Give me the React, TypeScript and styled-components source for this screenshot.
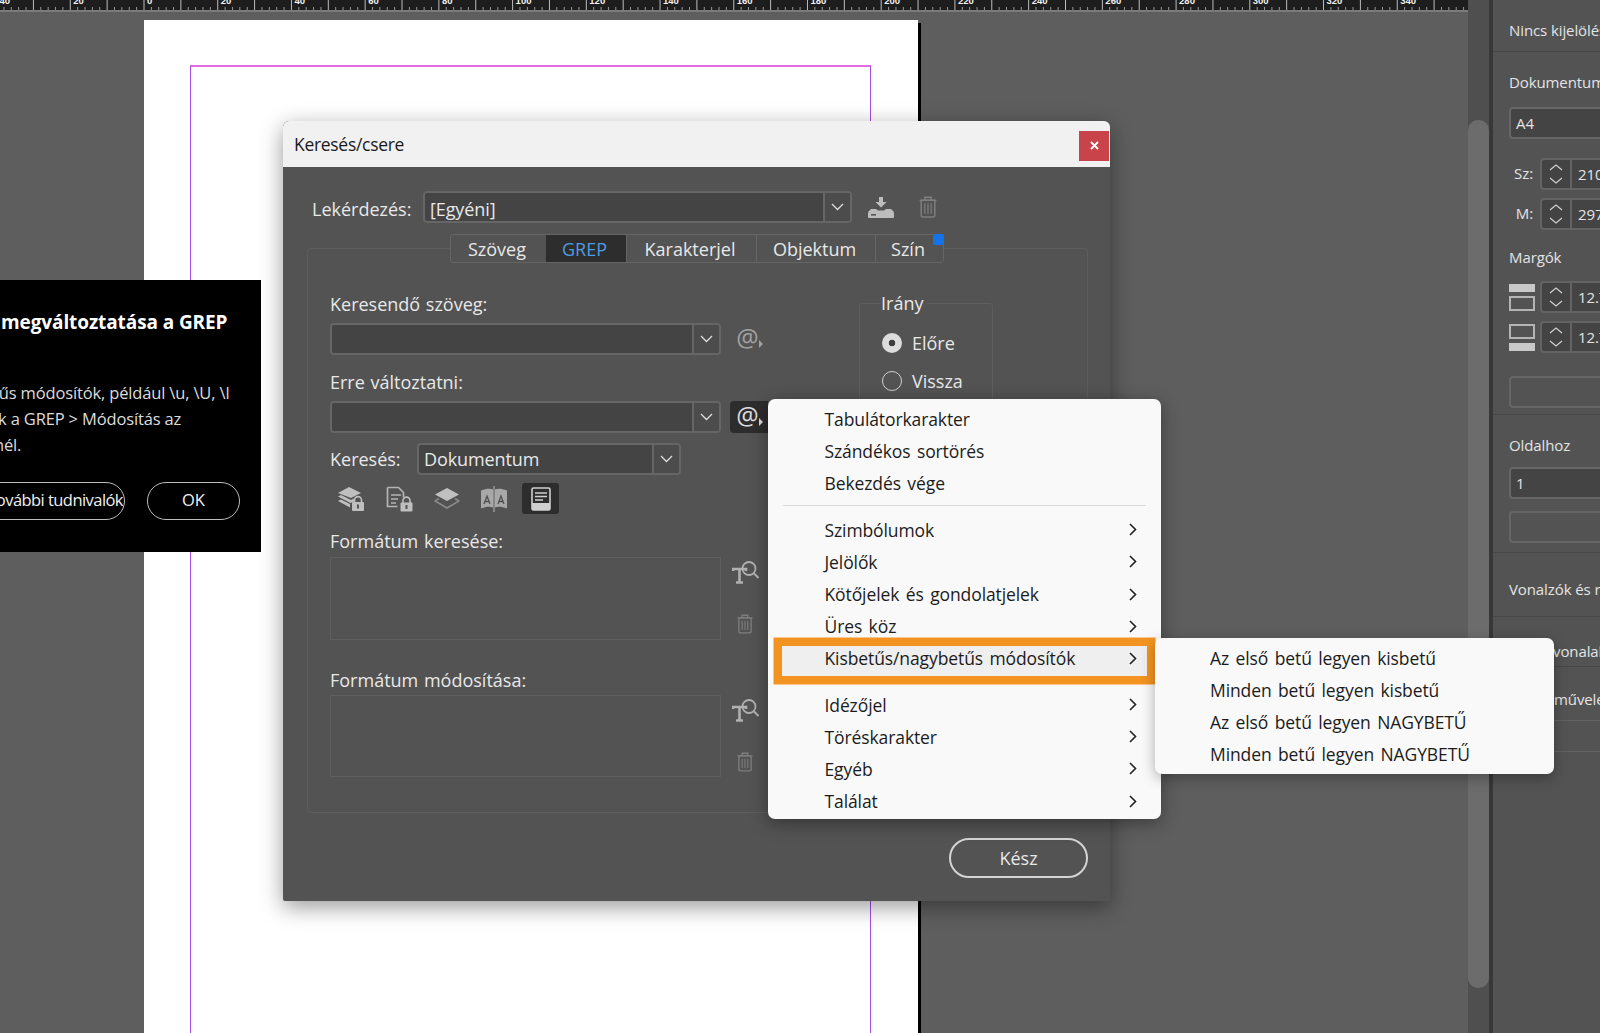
import React from "react";
import styled, { createGlobalStyle } from "styled-components";

const FONT = `"Open Sans", "Noto Sans", "Liberation Sans", sans-serif`;

const Global = createGlobalStyle`
  html, body { margin: 0; padding: 0; background: #5e5e5e; }
  body { font-family: ${FONT}; }
  * { box-sizing: border-box; }
`;

const Shell = styled.div`
  position: relative;
  width: 1600px;
  height: 1033px;
  overflow: hidden;
  display: flex;
  background: #5e5e5e;
`;

const Work = styled.div`
  width: 1468px;
  height: 1033px;
  display: flex;
  flex-direction: column;
  overflow: hidden;
`;

const RulerBar = styled.div`
  height: 12px;
  flex: none;
  background: #1d1d1d;
  border-bottom: 2px solid #7b7b7b;
  overflow: hidden;
`;

const Canvas = styled.div`
  flex: 1;
  padding: 8px 0 0 144px;
  background: #5e5e5e;
  overflow: hidden;
`;

const Page = styled.div`
  width: 774px;
  height: 1100px;
  background: #fff;
  box-shadow: 3px 3px 0 #000;
  padding: 45px 47px 0 46px;
`;

const MarginFrame = styled.div`
  height: 1500px;
  border: 1px solid #a64de8;
  border-top-color: #e46ae8;
  border-top-width: 2px;
`;

const Track = styled.div`
  width: 21px;
  height: 1033px;
  background: #4f4f4f;
  padding-top: 120px;
  flex: none;
`;

const Thumb = styled.div`
  height: 868px;
  background: #6c6c6c;
  border-radius: 10px;
`;

const Panel = styled.aside`
  flex: none;
  width: 111px;
  height: 1033px;
  background: #535353;
  border-left: 4px solid #383838;
  color: #e4e4e4;
  font-size: 15px;
  letter-spacing: -0.1px;
  overflow: hidden;
`;

const PanelSection = styled.div<{ $h: number }>`
  height: ${(p) => p.$h}px;
  width: 300px;
  padding-left: 16px;
  border-bottom: 1px solid #484848;
`;

const PanelTitle = styled.div<{ $top: number; $left?: number }>`
  padding-top: ${(p) => p.$top}px;
  padding-left: ${(p) => p.$left ?? 0}px;
  line-height: 20px;
  white-space: nowrap;
`;

const PanelField = styled.div<{ $top: number }>`
  margin-top: ${(p) => p.$top}px;
  width: 200px;
  height: 32px;
  background: #444;
  border: 2px solid #666;
  border-radius: 4px;
  padding-left: 5px;
  line-height: 28px;
  font-size: 15px;
`;

const PanelGhost = styled(PanelField)`
  background: transparent;
`;

const SpinRow = styled.div<{ $top: number }>`
  display: flex;
  align-items: center;
  margin-top: ${(p) => p.$top}px;
  height: 32px;
`;

const SpinLabel = styled.div`
  width: 24px;
  text-align: right;
  margin-right: 7px;
  padding-bottom: 3px;
  font-size: 15px;
`;

const SpinIconSlot = styled.div`
  width: 31px;
  display: flex;
`;

const Spin = styled.div`
  width: 30px;
  height: 32px;
  background: #434343;
  border: 2px solid #636363;
  border-right: 0;
  border-radius: 4px 0 0 4px;
  display: flex;
  align-items: center;
  justify-content: center;
`;

const SpinValue = styled.div`
  width: 120px;
  height: 32px;
  background: #444;
  border: 2px solid #636363;
  border-radius: 0 4px 4px 0;
  padding-left: 6px;
  line-height: 28px;
  font-size: 15px;
`;

const PanelRule = styled.div<{ $h: number }>`
  height: ${(p) => p.$h}px;
  width: 300px;
  border-bottom: 1px solid #636363;
`;

/* dialog */
const Dialog = styled.section`
  position: absolute;
  left: 283px;
  top: 121px;
  width: 827px;
  height: 780px;
  background: #535353;
  border-radius: 6px 6px 2px 2px;
  box-shadow: 0 6px 22px rgba(0, 0, 0, 0.4);
  color: #e8e8e8;
  font-size: 18px;
  word-spacing: 1px;
`;

const TitleBar = styled.header`
  height: 46px;
  background: #f1f1f1;
  border-radius: 6px 6px 0 0;
  color: #1a1a1a;
  display: flex;
  align-items: center;
  justify-content: space-between;
  padding: 0 1px 0 11px;
`;

const TitleText = styled.div`
  font-size: 17.5px;
  letter-spacing: -0.3px;
`;

const CloseBtn = styled.div`
  width: 30px;
  height: 30px;
  background: #c9444a;
  color: #fff;
  display: flex;
  align-items: center;
  justify-content: center;
  margin-top: 3px;
`;

const QueryRow = styled.div`
  display: flex;
  align-items: center;
  margin: 24px 0 0 29px;
  height: 32px;
`;

const QueryLabel = styled.div`
  width: 111px;
  padding-top: 3px;
`;

const Select = styled.div<{ $w: number }>`
  width: ${(p) => p.$w}px;
  height: 32px;
  flex: none;
  display: flex;
  background: #444;
  border: 2px solid #666;
  border-radius: 4px;
  overflow: hidden;
`;

const SelectText = styled.div`
  flex: 1;
  padding-left: 5px;
  line-height: 29px;
  white-space: nowrap;
  letter-spacing: -0.1px;
`;

const QuerySelectText = styled(SelectText)`
  line-height: 32px;
`;

const SelectBtn = styled.div`
  width: 27px;
  flex: none;
  background: #4c4c4c;
  border-left: 2px solid #666;
  display: flex;
  align-items: center;
  justify-content: center;
`;

const QueryIcons = styled.div`
  display: flex;
  align-items: center;
  margin-left: 16px;
  gap: 25px;
`;

const Tabs = styled.nav`
  position: relative;
  margin: 11px 0 -15px 167px;
  width: 494px;
  height: 29px;
  display: flex;
  background: #535353;
  border: 1px solid #656565;
  border-radius: 3px;
`;

const Tab = styled.div<{ $w: number; $on?: boolean }>`
  width: ${(p) => p.$w}px;
  flex: none;
  height: 100%;
  padding: 1px 3px 0 0;
  display: flex;
  align-items: center;
  justify-content: center;
  background: ${(p) => (p.$on ? "#2d2d2d" : "transparent")};
  color: ${(p) => (p.$on ? "#4d9be0" : "#e8e8e8")};
  border-left: ${(p) => (p.$on ? "0" : "1px solid #656565")};
  &:first-child { border-left: 0; }
`;

const BlueDot = styled.span`
  position: absolute;
  right: -1px;
  top: -1px;
  width: 11px;
  height: 11px;
  border-radius: 2px;
  background: #1473e6;
`;

const Group = styled.div`
  margin: 0 22px 0 24px;
  height: 565px;
  border: 1px solid #5d5d5d;
  border-radius: 4px;
  padding: 44px 0 0 22px;
  display: flex;
`;

const LeftCol = styled.div`
  width: 529px;
  flex: none;
`;

const FieldLabel = styled.div<{ $top?: number }>`
  height: 24px;
  line-height: 22px;
  margin-top: ${(p) => p.$top ?? 0}px;
  white-space: nowrap;
`;

const ComboRow = styled.div<{ $top: number }>`
  margin-top: ${(p) => p.$top}px;
  display: flex;
  align-items: center;
`;

const AtBtn = styled.div<{ $on?: boolean }>`
  width: 38px;
  height: 32px;
  margin-left: 9px;
  flex: none;
  border-radius: 4px 0 0 4px;
  background: ${(p) => (p.$on ? "#2d2d2d" : "transparent")};
  color: ${(p) => (p.$on ? "#dcdcdc" : "#a0a0a0")};
  display: flex;
  align-items: center;
  justify-content: center;
  font-size: 25px;
  padding-left: 1px;
  padding-bottom: 3px;
  line-height: 1;
`;

const AtCaret = styled.span`
  width: 0;
  height: 0;
  margin: 12px 0 0 0;
  border-left: 4px solid currentColor;
  border-top: 4px solid transparent;
  border-bottom: 4px solid transparent;
`;

const SearchRow = styled.div`
  margin-top: 10px;
  display: flex;
  align-items: center;
`;

const SearchLabel = styled.div`
  width: 87px;
`;

const ToolRow = styled.div`
  margin-top: 8px;
  height: 31px;
  display: flex;
  align-items: center;
  padding-left: 2px;
`;

const ToolBtn = styled.div<{ $on?: boolean; $gap?: number }>`
  width: 37px;
  height: 31px;
  margin-right: ${(p) => p.$gap ?? 10}px;
  border-radius: 3px;
  background: ${(p) => (p.$on ? "#2d2d2d" : "transparent")};
  display: flex;
  align-items: center;
  justify-content: center;
`;

const FormatRow = styled.div<{ $top: number; $h: number }>`
  margin-top: ${(p) => p.$top}px;
  height: ${(p) => p.$h}px;
  display: flex;
`;

const FormatBox = styled.div`
  width: 391px;
  height: 100%;
  border: 1px solid #5e5e5e;
`;

const FormatTools = styled.div`
  width: 48px;
  display: flex;
  flex-direction: column;
  align-items: center;
  padding-top: 3px;
  gap: 30px;
`;

const Direction = styled.fieldset`
  margin: -2px 0 0 0;
  width: 134px;
  height: 160px;
  padding: 0 0 0 22px;
  border: 1px solid #5e5e5e;
  border-radius: 3px;
  min-inline-size: 0;
`;

const DirectionLegend = styled.legend`
  padding: 0 4px 0 0;
  margin-left: -1px;
  line-height: 24px;
`;

const Radio = styled.div<{ $top: number }>`
  display: flex;
  align-items: center;
  height: 24px;
  margin-top: ${(p) => p.$top}px;
`;

const RadioDot = styled.span<{ $on?: boolean }>`
  width: 20px;
  height: 20px;
  border-radius: 50%;
  margin-right: 10px;
  flex: none;
  background: ${(p) => (p.$on ? "radial-gradient(circle, #3d3d3d 0 3px, #dcdcdc 3.6px)" : "transparent")};
  border: ${(p) => (p.$on ? "0" : "1.5px solid #cfcfcf")};
`;

const Footer = styled.div`
  display: flex;
  justify-content: flex-end;
  margin: 25px 22px 0 0;
`;

const DoneBtn = styled.div`
  width: 139px;
  height: 40px;
  border: 2px solid #d4d4d4;
  border-radius: 20px;
  display: flex;
  align-items: center;
  justify-content: center;
`;

/* menus */
const Menu = styled.div`
  position: absolute;
  left: 768px;
  top: 399px;
  width: 393px;
  height: 420px;
  padding: 4px 14px 0;
  background: #f9f9f9;
  border-radius: 7px;
  box-shadow: 0 4px 18px rgba(0, 0, 0, 0.38);
  color: #1c1c1c;
  font-size: 17.5px;
  letter-spacing: -0.1px;
  word-spacing: 2px;
`;

const MenuRow = styled.div`
  position: relative;
  height: 32.2px;
  display: flex;
  align-items: center;
  justify-content: space-between;
  padding: 0 10px 0 42.5px;
  white-space: nowrap;
`;

const MenuRowLabel = styled.span`
  position: relative;
`;

const MenuRowArrow = styled.span`
  position: relative;
  display: flex;
`;

const HotRow = styled(MenuRow)`
  &::before {
    content: "";
    position: absolute;
    inset: 4px 0 -1px 0;
    background: #efefef;
    box-shadow: 0 0 0 8.5px #f39422;
  }
`;

const MenuSep = styled.div<{ $top: number; $bottom: number }>`
  height: 1px;
  background: #dcdcdc;
  margin: ${(p) => p.$top}px 1px ${(p) => p.$bottom}px;
`;

const SubMenu = styled.div`
  position: absolute;
  left: 1155px;
  top: 638px;
  width: 399px;
  height: 136px;
  padding: 5px 0 0 55px;
  background: #f9f9f9;
  border-radius: 7px;
  box-shadow: 0 4px 14px rgba(0, 0, 0, 0.3);
  color: #1c1c1c;
  font-size: 17.5px;
  letter-spacing: -0.1px;
  word-spacing: 2px;
`;

const SubRow = styled.div`
  height: 32px;
  line-height: 31px;
  white-space: nowrap;
`;

/* callout */
const Callout = styled.div`
  position: absolute;
  left: 0;
  top: 280px;
  width: 261px;
  height: 272px;
  background: #000;
  color: #dcdcdc;
  overflow: hidden;
  font-size: 16.5px;
  padding-top: 30px;
`;

const CalloutTitle = styled.div`
  margin-left: 1px;
  color: #fff;
  font-weight: 700;
  font-size: 19px;
  line-height: 25px;
  letter-spacing: -0.1px;
  white-space: nowrap;
`;

const CalloutLine = styled.div<{ $lead: number }>`
  margin-left: ${(p) => p.$lead}px;
  line-height: 25.8px;
  letter-spacing: -0.15px;
  white-space: nowrap;
`;

const CalloutBody = styled.div`
  margin-top: 45px;
`;

const CalloutActions = styled.div`
  display: flex;
  margin-top: 25px;
  align-items: center;
`;

const PillMore = styled.div`
  width: 182px;
  height: 38px;
  margin-left: -57px;
  border: 1.5px solid #bdbdbd;
  border-radius: 19px;
  display: flex;
  align-items: center;
  justify-content: flex-end;
  color: #f0f0f0;
  letter-spacing: -0.55px;
  white-space: nowrap;
  overflow: hidden;
  padding: 0 1px 3px 0;
`;

const PillOk = styled.div`
  width: 93px;
  height: 38px;
  margin-left: 22px;
  border: 1.5px solid #bdbdbd;
  border-radius: 19px;
  display: flex;
  align-items: center;
  justify-content: center;
  padding-bottom: 3px;
  color: #f0f0f0;
`;

const RulerSvg = styled.svg`
  display: block;
`;

/* drawings */
const Chevron = ({ dir = "down", color = "#dedede" }: { dir?: "down" | "up" | "right"; color?: string }) => {
  if (dir === "right")
    return (
      <svg width="8" height="13" viewBox="0 0 8 13" fill="none" stroke={color} strokeWidth="1.6">
        <path d="M1 1l5.5 5.5L1 12" />
      </svg>
    );
  return (
    <svg width="13" height="8" viewBox="0 0 13 8" fill="none" stroke={color} strokeWidth="1.3" style={dir === "up" ? { transform: "scaleY(-1)" } : undefined}>
      <path d="M1 1l5.5 5.5L12 1" />
    </svg>
  );
};

const SpinArrows = () => (
  <svg width="14" height="24" viewBox="0 0 14 24" fill="none" stroke="#d0d0d0" strokeWidth="1.2">
    <path d="M1 8l6-5 6 5M1 16l6 5 6-5" />
  </svg>
);

const ImportIcon = () => (
  <svg width="26" height="21" viewBox="0 0 26 21" fill="#bdbdbd">
    <path d="M11 0h4v5h3.500L13 10.500 7.500 5H11z" />
    <path d="M3 12h5l2 1.500h6L18 12h5l3 3H0z" />
    <rect x="0" y="15" width="26" height="6" rx="1" />
    <rect x="3" y="17" width="5" height="1.600" fill="#555" />
  </svg>
);

const TrashIcon = ({ color = "#7f7f7f", w = 18, h = 22 }: { color?: string; w?: number; h?: number }) => (
  <svg width={w} height={h} viewBox="0 0 17 21" fill="none" stroke={color} strokeWidth="1.4">
    <path d="M0.500 4h16M5.500 4V1.200h6V4" />
    <rect x="2" y="4" width="13" height="16" rx="1.500" />
    <path d="M5.500 7v10M8.500 7v10M11.500 7v10" strokeWidth="1.100" />
  </svg>
);

const Lock = ({ x, y }: { x: number; y: number }) => (
  <g transform={`translate(${x} ${y})`}>
    <path d="M2.500 6V3.600a3.500 3.500 0 017 0V6" fill="none" stroke="#bfbfbf" strokeWidth="1.600" />
    <rect x="0" y="5.500" width="12" height="9" rx="1" fill="#bfbfbf" />
    <rect x="5" y="8" width="2" height="4" fill="#535353" />
  </g>
);

const StoryLockIcon = () => (
  <svg width="28" height="26" viewBox="0 0 28 26">
    <path d="M12 1l12 6-10 5L1 7z" fill="#bfbfbf" />
    <path d="M1 10.500l3-1.600L14 14l3-1.500v3L13.500 17z" fill="#bfbfbf" />
    <path d="M1 15l3-1.500L13 18v3.500z" fill="#bfbfbf" />
    <Lock x={15} y={10.500} />
  </svg>
);

const DocLockIcon = () => (
  <svg width="27" height="26" viewBox="0 0 27 26" fill="none">
    <path d="M1.500 1.500h11l5 5v5M1.500 1.500v19h10" stroke="#b4b4b4" strokeWidth="1.700" />
    <path d="M5 9h10M5 13h7M5 17h5" stroke="#b4b4b4" strokeWidth="1.700" />
    <Lock x={14.500} y={11} />
  </svg>
);

const LayersIcon = () => (
  <svg width="26" height="24" viewBox="0 0 26 24" fill="none">
    <path d="M13 1l12 6.500L13 14 1 7.500z" fill="#c0c0c0" />
    <path d="M5 11.500L1 14l12 7 12-7-4-2.500" stroke="#8a8a8a" strokeWidth="1.600" />
  </svg>
);

const BookIcon = () => (
  <svg width="28" height="26" viewBox="0 0 28 26">
    <path d="M13 3.500C10 2 6 2.500 1 4.500v18c5-2 9-2.500 12-1zM15 3.500c3-1.500 7-1 12 1v18c-5-2-9-2.500-12-1z" fill="#a8a8a8" />
    <path d="M14 0v26" stroke="#a8a8a8" strokeWidth="1.200" />
    <path d="M4 18l3-8 3 8M5 15.500h4M18 18l3-8 3 8M19 15.500h4" stroke="#4f4f4f" strokeWidth="1.300" fill="none" />
  </svg>
);

const DocSelIcon = () => (
  <svg width="20" height="24" viewBox="0 0 20 24" fill="none">
    <rect x="1" y="1" width="18" height="22" rx="1.500" stroke="#cfcfcf" strokeWidth="1.600" />
    <path d="M4 6h12M4 9.500h12M4 13h8" stroke="#cfcfcf" strokeWidth="1.400" />
    <rect x="1" y="16" width="18" height="7" fill="#cfcfcf" />
  </svg>
);

const FormatSearchIcon = () => (
  <svg width="27" height="24" viewBox="0 0 27 24" fill="none" stroke="#b0b0b0">
    <circle cx="17" cy="8.500" r="6.500" strokeWidth="1.800" />
    <path d="M21.500 13L26.500 18" strokeWidth="2" />
    <path d="M1 11V9h13v2M7.500 9V22M4 22.500h7" strokeWidth="2.600" />
  </svg>
);

const MarginTopIcon = () => (
  <svg width="26" height="27" viewBox="0 0 26 27">
    <rect x="0" y="0" width="26" height="8" fill="#c8c8c8" />
    <rect x="1" y="13" width="24" height="13" fill="none" stroke="#b4b4b4" strokeWidth="2" />
  </svg>
);

const MarginBottomIcon = () => (
  <svg width="26" height="27" viewBox="0 0 26 27">
    <rect x="1" y="1" width="24" height="13" fill="none" stroke="#b4b4b4" strokeWidth="2" />
    <rect x="0" y="19" width="26" height="8" fill="#c8c8c8" />
  </svg>
);

const Ruler = () => {
  const mm = 3.686;
  const ticks: React.ReactNode[] = [];
  const labels: React.ReactNode[] = [];
  for (let i = -40; i <= 360; i += 2) {
    const x = 144 + i * mm;
    const major = i % 10 === 0;
    ticks.push(<line key={i} x1={x} x2={x} y1={major ? 0 : 7} y2={10} stroke={major ? "#bdbdbd" : "#999"} strokeWidth="1" />);
    if (i % 20 === 0)
      labels.push(
        <text key={`t${i}`} x={x + 3} y={3.5} fill="#f2f2f2" fontSize="9.500" fontWeight="700" fontFamily="Liberation Sans, sans-serif">
          {Math.abs(i)}
        </text>,
      );
  }
  return (
    <RulerSvg width="1468" height="10" viewBox="0 0 1468 10">
      {ticks}
      {labels}
    </RulerSvg>
  );
};

const plainRows = ["Tabulátorkarakter", "Szándékos sortörés", "Bekezdés vége"];
const subRowsA = ["Szimbólumok", "Jelölők", "Kötőjelek és gondolatjelek", "Üres köz"];
const subRowsB = ["Idézőjel", "Töréskarakter", "Egyéb", "Találat"];
const caseRows = ["Az első betű legyen kisbetű", "Minden betű legyen kisbetű", "Az első betű legyen NAGYBETŰ", "Minden betű legyen NAGYBETŰ"];

const ArrowRow = ({ label }: { label: string }) => (
  <MenuRow>
    <MenuRowLabel>{label}</MenuRowLabel>
    <MenuRowArrow>
      <Chevron dir="right" color="#222" />
    </MenuRowArrow>
  </MenuRow>
);

export default function App() {
  return (
    <Shell>
      <Global />
      <Work>
        <RulerBar>
          <Ruler />
        </RulerBar>
        <Canvas>
          <Page>
            <MarginFrame />
          </Page>
        </Canvas>
      </Work>
      <Track>
        <Thumb />
      </Track>
      <Panel>
        <PanelSection $h={52}>
          <PanelTitle $top={20}>Nincs kijelölés</PanelTitle>
        </PanelSection>
        <PanelSection $h={363}>
          <PanelTitle $top={20}>Dokumentum</PanelTitle>
          <PanelField $top={15}>A4</PanelField>
          <SpinRow $top={19}>
            <SpinLabel>Sz:</SpinLabel>
            <Spin>
              <SpinArrows />
            </Spin>
            <SpinValue>210 mm</SpinValue>
          </SpinRow>
          <SpinRow $top={8}>
            <SpinLabel>M:</SpinLabel>
            <Spin>
              <SpinArrows />
            </Spin>
            <SpinValue>297 mm</SpinValue>
          </SpinRow>
          <PanelTitle $top={17}>Margók</PanelTitle>
          <SpinRow $top={14}>
            <SpinIconSlot>
              <MarginTopIcon />
            </SpinIconSlot>
            <Spin>
              <SpinArrows />
            </Spin>
            <SpinValue>12.7 mm</SpinValue>
          </SpinRow>
          <SpinRow $top={8}>
            <SpinIconSlot>
              <MarginBottomIcon />
            </SpinIconSlot>
            <Spin>
              <SpinArrows />
            </Spin>
            <SpinValue>12.7 mm</SpinValue>
          </SpinRow>
          <PanelGhost $top={23} />
        </PanelSection>
        <PanelSection $h={138}>
          <PanelTitle $top={20}>Oldalhoz</PanelTitle>
          <PanelField $top={12}>1</PanelField>
          <PanelGhost $top={12} />
        </PanelSection>
        <PanelSection $h={64}>
          <PanelTitle $top={26}>Vonalzók és rácsok</PanelTitle>
        </PanelSection>
        <PanelSection $h={50}>
          <PanelTitle $top={24} $left={44}>vonalak</PanelTitle>
        </PanelSection>
        <PanelRule $h={54}>
          <PanelTitle $top={22} $left={61}>műveletek</PanelTitle>
        </PanelRule>
        <PanelRule $h={31} />
      </Panel>

      <Callout>
        <CalloutTitle>megváltoztatása a GREP</CalloutTitle>
        <CalloutBody>
          <CalloutLine $lead={-7}>tűs módosítók, például \u, \U, \l</CalloutLine>
          <CalloutLine $lead={-2}>k a GREP &gt; Módosítás az</CalloutLine>
          <CalloutLine $lead={-6}>nél.</CalloutLine>
        </CalloutBody>
        <CalloutActions>
          <PillMore>további tudnivalók</PillMore>
          <PillOk>OK</PillOk>
        </CalloutActions>
      </Callout>

      <Dialog>
        <TitleBar>
          <TitleText>Keresés/csere</TitleText>
          <CloseBtn>
            <svg width="9" height="9" viewBox="0 0 9 9" stroke="#fff" strokeWidth="1.8">
              <path d="M1 1l7 7M8 1L1 8" />
            </svg>
          </CloseBtn>
        </TitleBar>
        <QueryRow>
          <QueryLabel>Lekérdezés:</QueryLabel>
          <Select $w={429}>
            <QuerySelectText>[Egyéni]</QuerySelectText>
            <SelectBtn>
              <Chevron />
            </SelectBtn>
          </Select>
          <QueryIcons>
            <ImportIcon />
            <TrashIcon />
          </QueryIcons>
        </QueryRow>
        <Tabs>
          <Tab $w={95}>Szöveg</Tab>
          <Tab $w={80} $on>GREP</Tab>
          <Tab $w={130}>Karakterjel</Tab>
          <Tab $w={119}>Objektum</Tab>
          <Tab $w={68}>Szín</Tab>
          <BlueDot />
        </Tabs>
        <Group>
          <LeftCol>
            <FieldLabel>Keresendő szöveg:</FieldLabel>
            <ComboRow $top={6}>
              <Select $w={391}>
                <SelectText />
                <SelectBtn>
                  <Chevron />
                </SelectBtn>
              </Select>
              <AtBtn>
                @<AtCaret />
              </AtBtn>
            </ComboRow>
            <FieldLabel $top={16}>Erre változtatni:</FieldLabel>
            <ComboRow $top={6}>
              <Select $w={391}>
                <SelectText />
                <SelectBtn>
                  <Chevron />
                </SelectBtn>
              </Select>
              <AtBtn $on>
                @<AtCaret />
              </AtBtn>
            </ComboRow>
            <SearchRow>
              <SearchLabel>Keresés:</SearchLabel>
              <Select $w={264}>
                <SelectText>Dokumentum</SelectText>
                <SelectBtn>
                  <Chevron />
                </SelectBtn>
              </Select>
            </SearchRow>
            <ToolRow>
              <ToolBtn $gap={12}>
                <StoryLockIcon />
              </ToolBtn>
              <ToolBtn>
                <DocLockIcon />
              </ToolBtn>
              <ToolBtn>
                <LayersIcon />
              </ToolBtn>
              <ToolBtn>
                <BookIcon />
              </ToolBtn>
              <ToolBtn $on>
                <DocSelIcon />
              </ToolBtn>
            </ToolRow>
            <FieldLabel $top={16}>Formátum keresése:</FieldLabel>
            <FormatRow $top={3} $h={83}>
              <FormatBox />
              <FormatTools>
                <FormatSearchIcon />
                <TrashIcon w={16} h={20} />
              </FormatTools>
            </FormatRow>
            <FieldLabel $top={29}>Formátum módosítása:</FieldLabel>
            <FormatRow $top={2} $h={82}>
              <FormatBox />
              <FormatTools>
                <FormatSearchIcon />
                <TrashIcon w={16} h={20} />
              </FormatTools>
            </FormatRow>
          </LeftCol>
          <Direction>
            <DirectionLegend>Irány</DirectionLegend>
            <Radio $top={16}>
              <RadioDot $on />
              Előre
            </Radio>
            <Radio $top={14}>
              <RadioDot />
              Vissza
            </Radio>
          </Direction>
        </Group>
        <Footer>
          <DoneBtn>Kész</DoneBtn>
        </Footer>
      </Dialog>

      <Menu>
        {plainRows.map((r) => (
          <MenuRow key={r}>
            <MenuRowLabel>{r}</MenuRowLabel>
          </MenuRow>
        ))}
        <MenuSep $top={5} $bottom={8} />
        {subRowsA.map((r) => (
          <ArrowRow key={r} label={r} />
        ))}
        <HotRow>
          <MenuRowLabel>Kisbetűs/nagybetűs módosítók</MenuRowLabel>
          <MenuRowArrow>
            <Chevron dir="right" color="#222" />
          </MenuRowArrow>
        </HotRow>
        <MenuSep $top={7} $bottom={6} />
        {subRowsB.map((r) => (
          <ArrowRow key={r} label={r} />
        ))}
      </Menu>

      <SubMenu>
        {caseRows.map((r) => (
          <SubRow key={r}>{r}</SubRow>
        ))}
      </SubMenu>
    </Shell>
  );
}
